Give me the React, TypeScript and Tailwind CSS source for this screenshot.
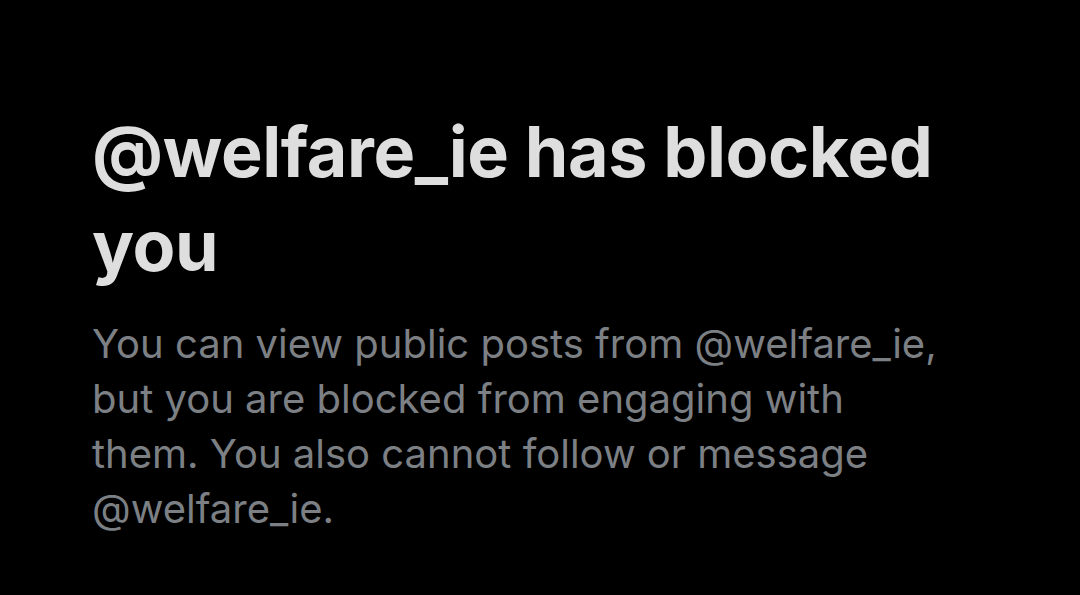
import React from 'react';

const handle = '@welfare_ie';

const BlockedNotice: React.FC = () => {
  return (
    <div className="w-[855px] pl-[92px] pt-[105px] box-content">
      <h1 className="text-[70px] leading-[94px] font-bold text-[#dedede] tracking-[-0.4px]">
        {handle} has blocked you
      </h1>
      <p className="mt-[23px] text-[40px] leading-[55px] text-[#7c8085]">
        You can view public posts from {handle}, but you are blocked from engaging with them. You also cannot follow or
        message {handle}.
      </p>
    </div>
  );
};

export default function App() {
  return (
    <div className="w-[1080px] h-[595px] overflow-hidden bg-black font-['Inter',sans-serif]">
      <BlockedNotice />
    </div>
  );
}
